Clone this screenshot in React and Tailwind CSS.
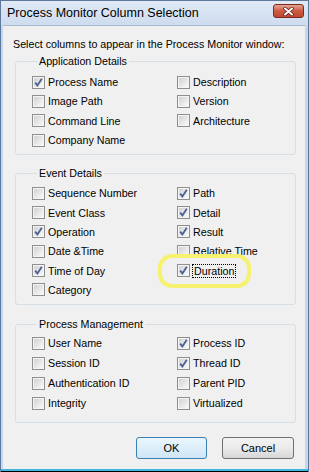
import React from 'react';

const font = { fontFamily: '"Liberation Sans", Arial, sans-serif' };

function Check({ checked }) {
  return (
    <span className="w-[13px] h-[13px] shrink-0 border border-[#8f8f8f] bg-[#f4f4f4] p-[1px] flex">
      <span className="flex-1 bg-gradient-to-br from-[#d2d2d2] to-[#f9f9f9] flex items-center justify-center">
        {checked && (
          <svg width="9" height="9" viewBox="0 0 9 9">
            <path d="M1.2 4.6 L3.4 7.4 L7.8 0.8" fill="none" stroke="#4a5f96" strokeWidth="1.8" />
          </svg>
        )}
      </span>
    </span>
  );
}

function Item({ label, checked, focused, highlight }) {
  return (
    <div className="relative flex items-center gap-[3px] h-full">
      {highlight && (
        <span className="absolute left-[-19px] top-1/2 -translate-y-1/2 w-[93px] h-[34px] rounded-[14px] border-[4px] border-[#f6f270]" />
      )}
      <Check checked={checked} />
      <span className={focused ? 'outline outline-1 outline-dotted outline-black leading-[12px] px-[1px]' : ''}>{label}</span>
    </div>
  );
}

function Group({ title, items, rowH, className }) {
  return (
    <fieldset className={'ml-[12px] w-[281px] border border-[#d5dfe5] rounded-[3px] pl-[16px] ' + className}>
      <legend className="ml-[5px] px-[2px] leading-[13px]">{title}</legend>
      <div className={'grid grid-cols-[145px_1fr] ' + rowH}>
        {items.map((it, i) => (
          <div key={i} className="h-full">
            {it && <Item {...it} />}
          </div>
        ))}
      </div>
    </fieldset>
  );
}

export default function App() {
  const app = [
    { label: 'Process Name', checked: true },
    { label: 'Description' },
    { label: 'Image Path' },
    { label: 'Version' },
    { label: 'Command Line' },
    { label: 'Architecture' },
    { label: 'Company Name' },
    null,
  ];
  const events = [
    { label: 'Sequence Number' },
    { label: 'Path', checked: true },
    { label: 'Event Class' },
    { label: 'Detail', checked: true },
    { label: 'Operation', checked: true },
    { label: 'Result', checked: true },
    { label: 'Date &Time' },
    { label: 'Relative Time' },
    { label: 'Time of Day', checked: true },
    { label: 'Duration', checked: true, focused: true, highlight: true },
    { label: 'Category' },
    null,
  ];
  const procs = [
    { label: 'User Name' },
    { label: 'Process ID', checked: true },
    { label: 'Session ID' },
    { label: 'Thread ID', checked: true },
    { label: 'Authentication ID' },
    { label: 'Parent PID' },
    { label: 'Integrity' },
    { label: 'Virtualized' },
  ];

  return (
    <div style={font} className="w-[309px] h-[472px] flex flex-col bg-[#c6d7ec] border border-[#5d7a9c] border-b-0 text-[10.7px] text-black">
      <div className="h-[24px] shrink-0 flex items-center justify-between pl-[6px] pr-[4px] bg-gradient-to-b from-[#e1eaf6] to-[#cddcee]">
        <span className="text-[12.5px] text-black">Process Monitor Column Selection</span>
        <span className="w-[31px] h-[14px] mt-[-4px] rounded-[3px] border border-[#7b2a22] bg-gradient-to-b from-[#e8a493] via-[#cc5a43] to-[#c3462e] flex items-center justify-center">
          <svg width="11" height="9" viewBox="0 0 11 9">
            <path d="M2 1.5 L9 7.5 M9 1.5 L2 7.5" stroke="#5a1b12" strokeWidth="3.4" strokeLinecap="round" />
            <path d="M2 1.5 L9 7.5 M9 1.5 L2 7.5" stroke="#ffffff" strokeWidth="2" strokeLinecap="round" />
          </svg>
        </span>
      </div>
      <div className="flex-1 ml-[2px] mr-[3px] bg-[#f0f0f0] border-t border-[#a7b9cf] flex flex-col">
        <p className="pl-[10px] pt-[12px] leading-[13px]">Select columns to appear in the Process Monitor window:</p>
        <Group title="Application Details" items={app} rowH="auto-rows-[19.3px]" className="mt-[3.5px] pt-[5px] pb-[4px]" />
        <Group title="Event Details" items={events} rowH="auto-rows-[19.3px]" className="mt-[12.5px] pt-[3.5px] pb-[5px]" />
        <Group title="Process Management" items={procs} rowH="auto-rows-[20px]" className="mt-[12.5px] pt-[2.5px] pb-[9px]" />
        <div className="flex justify-end gap-[15px] pr-[11px] mt-[14px]">
          <button style={font} className="w-[71px] h-[22px] rounded-[3px] border border-[#3c7fb1] bg-gradient-to-b from-[#eaf6fd] to-[#cfe6f5] text-[11px]">OK</button>
          <button style={font} className="w-[72px] h-[22px] rounded-[3px] border border-[#707070] bg-gradient-to-b from-[#f2f2f2] via-[#ebebeb] to-[#d6d6d6] text-[11px]">Cancel</button>
        </div>
      </div>
      <div className="h-[2px] bg-[#3fb7e0]" />
      <div className="h-[1px] bg-black" />
    </div>
  );
}
